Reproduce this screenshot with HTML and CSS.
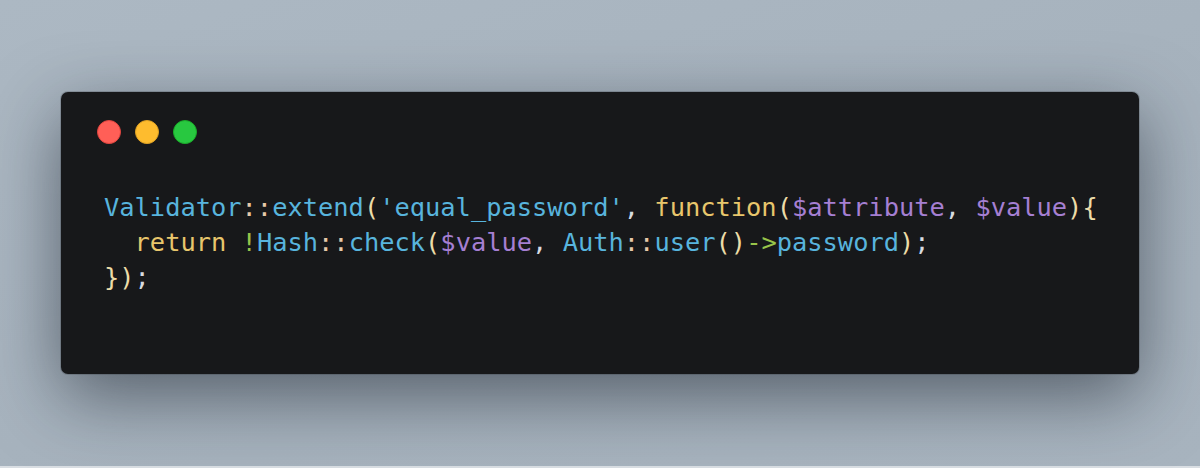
FILE: index.html
```html
<!DOCTYPE html>
<html>
<head>
<meta charset="utf-8">
<link rel="stylesheet" href="styles.css">
</head>
<body>
<div class="stage">
  <div class="window">
    <div class="dots">
      <span class="dot red"></span>
      <span class="dot yellow"></span>
      <span class="dot green"></span>
    </div>
    <pre class="code"><span class="b">Validator</span><span class="p">::</span><span class="b">extend</span><span class="y2">(</span><span class="b">'equal_password'</span><span class="w">, </span><span class="y">function</span><span class="y2">(</span><span class="v">$attribute</span><span class="w">, </span><span class="v">$value</span><span class="y2">){</span>
  <span class="y">return</span> <span class="g">!</span><span class="b">Hash</span><span class="p">::</span><span class="b">check</span><span class="y2">(</span><span class="v">$value</span><span class="w">, </span><span class="b">Auth</span><span class="p">::</span><span class="b">user</span><span class="y2">()</span><span class="g">-&gt;</span><span class="b">password</span><span class="y2">)</span><span class="w">;</span>
<span class="y2">})</span><span class="w">;</span></pre>
  </div>
</div>
</body>
</html>
```
FILE: styles.css
```css
html, body {
  margin: 0;
  padding: 0;
}
body {
  width: 1200px;
  height: 468px;
  overflow: hidden;
  background: #a9b5c0;
}
.stage {
  box-sizing: border-box;
  width: 1200px;
  height: 468px;
  padding: 92px 61px 0 61px;
  background: linear-gradient(160deg, #acb8c3 0%, #a6b2bd 60%, #a8b4bf 100%);
  border-bottom: 2px solid #d9dee3;
}
.window {
  height: 282px;
  box-sizing: border-box;
  background: #17181a;
  border-radius: 7px;
  padding: 28px 0 0 36px;
  box-shadow: 0 22px 70px rgba(20, 28, 38, 0.55), 0 0 0 1px rgba(0,0,0,0.15);
}
.dots {
  display: flex;
  gap: 14px;
}
.dot {
  width: 24px;
  height: 24px;
  border-radius: 50%;
  box-sizing: border-box;
}
.red { background: #ff5f57; border: 1px solid #e0443e; }
.yellow { background: #febc2e; border: 1px solid #dea123; }
.green { background: #28c840; border: 1px solid #1aab29; }
.code {
  margin: 46px 0 0 7px;
  font-family: "DejaVu Sans Mono", monospace;
  font-size: 25.4px;
  line-height: 35px;
  color: #d7dae0;
}
.b { color: #58b4dd; }
.p { color: #e6c9a8; }
.y { color: #e8c66c; }
.y2 { color: #ecdca8; }
.v { color: #a57fd2; }
.w { color: #d7dae0; }
.g { color: #98c44a; }
```
